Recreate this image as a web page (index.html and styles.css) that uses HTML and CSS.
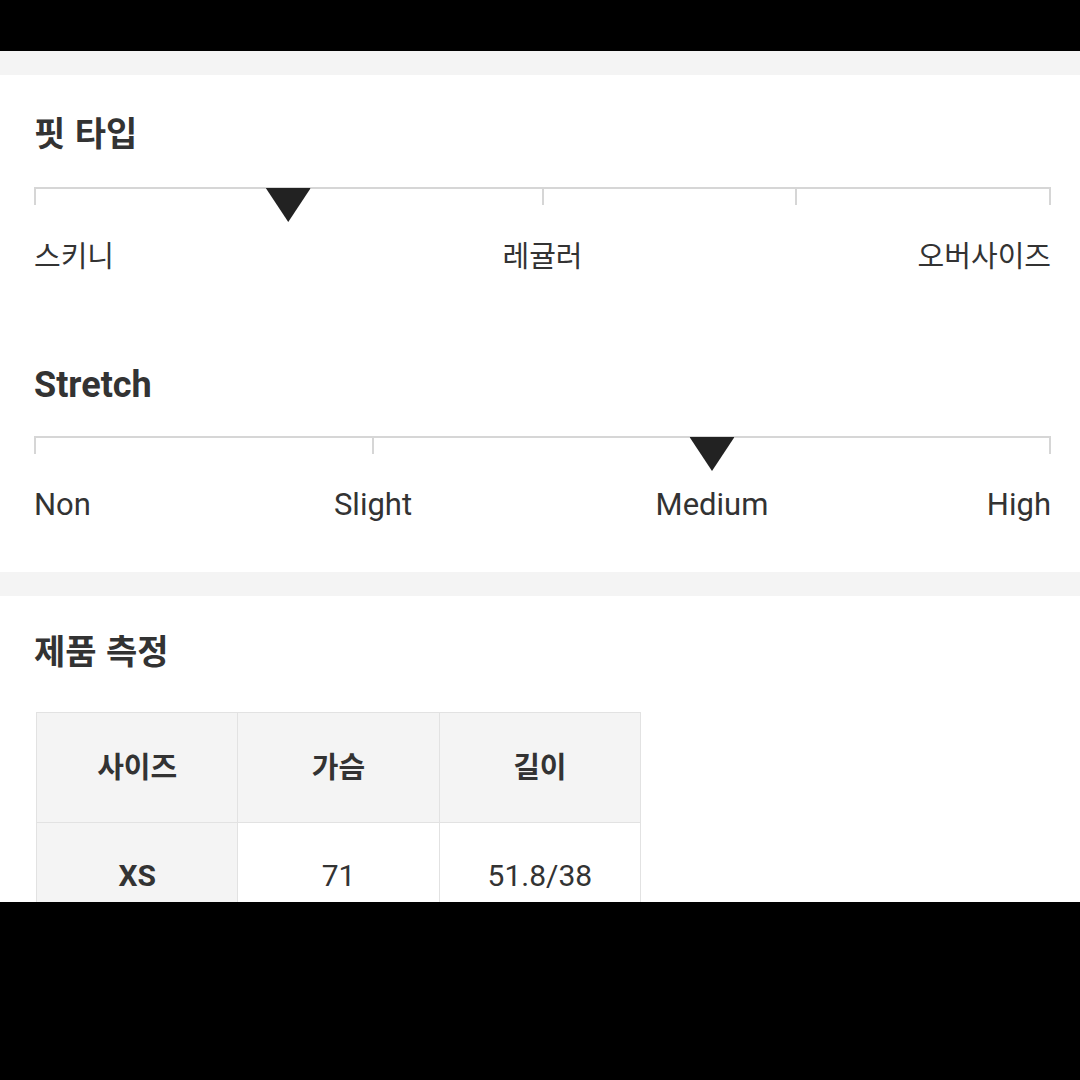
FILE: index.html
```html
<!DOCTYPE html>
<html lang="ko">
<head>
<meta charset="utf-8">
<title>핏 타입</title>
<link rel="stylesheet" href="styles.css">
</head>
<body>
<div class="topbar"></div>
<main class="page">
  <div class="band"></div>
  <section class="card fit-card">
    <h2 class="heading ko">핏 타입</h2>
    <div class="scale">
      <div class="track">
        <span class="tick"></span><span class="tick"></span><span class="tick"></span><span class="tick"></span><span class="tick"></span>
      </div>
      <div class="marker" style="left:25%"></div>
    </div>
    <div class="labels labels-4">
      <span class="lab ko l-start">스키니</span>
      <span class="lab ko l-mid">레귤러</span>
      <span class="lab ko l-end">오버사이즈</span>
    </div>

    <h2 class="heading en stretch-heading">Stretch</h2>
    <div class="scale">
      <div class="track">
        <span class="tick"></span><span class="tick"></span><span class="tick"></span><span class="tick"></span>
      </div>
      <div class="marker" style="left:66.667%"></div>
    </div>
    <div class="labels labels-6">
      <span class="lab en s-non">Non</span>
      <span class="lab en s-slight">Slight</span>
      <span class="lab en s-medium">Medium</span>
      <span class="lab en s-high">High</span>
    </div>
  </section>
  <div class="band"></div>
  <section class="card measure-card">
    <h2 class="heading ko">제품 측정</h2>
    <table class="size-table">
      <thead>
        <tr><th class="ko">사이즈</th><th class="ko">가슴</th><th class="ko">길이</th></tr>
      </thead>
      <tbody>
        <tr><td class="size-cell">XS</td><td>71</td><td>51.8/38</td></tr>
      </tbody>
    </table>
  </section>
</main>
</body>
</html>
```
FILE: styles.css
```css
html, body {
  margin: 0;
  padding: 0;
  background: #000;
}
body {
  width: 1080px;
  height: 1080px;
  overflow: hidden;
  font-family: Roboto, "Noto Sans CJK KR", sans-serif;
  color: #333;
}
.topbar {
  height: 51px;
  background: #000;
}
.page {
  background: #fff;
}
.band {
  height: 24px;
  background: #f4f4f4;
}
.card {
  background: #fff;
  padding: 0 29px 0 34px;
}
.fit-card {
  height: 497px;
  padding-top: 37px;
  box-sizing: border-box;
}
.measure-card {
  height: 306px;
  padding-top: 34px;
  box-sizing: border-box;
  overflow: hidden;
}
.heading {
  margin: 0;
  font-weight: 700;
  color: #333;
}
.heading.ko {
  font-family: "Noto Sans CJK KR", sans-serif;
  font-size: 34px;
  line-height: 40px;
}
.heading.en {
  font-family: Roboto, sans-serif;
  font-size: 36px;
  line-height: 40px;
}
.stretch-heading {
  margin-top: 94px;
}
.scale {
  position: relative;
  margin-top: 35px;
}
.stretch-heading + .scale {
  margin-top: 31px;
}
.track {
  display: flex;
  justify-content: space-between;
  border-top: 2px solid #d6d6d6;
  height: 16px;
}
.tick {
  width: 2px;
  height: 16px;
  background: #d6d6d6;
}
.marker {
  position: absolute;
  top: 1px;
  width: 45px;
  height: 34px;
  transform: translateX(-50%);
  background: #222;
  clip-path: polygon(0 0, 100% 0, 50% 100%);
}
.labels {
  display: grid;
  margin-top: 32px;
}
.labels-4 {
  grid-template-columns: repeat(4, 1fr);
}
.labels-6 {
  grid-template-columns: repeat(6, 1fr);
  margin-top: 34px;
}
.lab {
  white-space: nowrap;
  color: #333;
}
.lab.ko {
  font-family: "Noto Sans CJK KR", sans-serif;
  font-size: 29px;
  line-height: 34px;
}
.lab.en {
  font-family: Roboto, sans-serif;
  font-size: 31px;
  line-height: 34px;
}
.l-start { grid-column: 1; justify-self: start; }
.l-mid { grid-column: 2 / 4; justify-self: center; }
.l-end { grid-column: 4; justify-self: end; }
.s-non { grid-column: 1; justify-self: start; }
.s-slight { grid-column: 2 / 4; justify-self: center; }
.s-medium { grid-column: 4 / 6; justify-self: center; }
.s-high { grid-column: 6; justify-self: end; }

.size-table {
  margin: 42px 0 0 2px;
  border-collapse: collapse;
  table-layout: fixed;
  width: 605px;
}
.size-table th,
.size-table td {
  border: 1px solid #e2e2e2;
  padding: 0;
  text-align: center;
  vertical-align: middle;
  color: #333;
}
.size-table th {
  height: 110px;
  padding-bottom: 6px;
  box-sizing: border-box;
  background: #f4f4f4;
  font-family: "Noto Sans CJK KR", sans-serif;
  font-weight: 700;
  font-size: 29px;
}
.size-table td {
  height: 106px;
  vertical-align: top;
  padding-top: 35px;
  font-family: Roboto, sans-serif;
  font-size: 30px;
  line-height: 36px;
  font-weight: 400;
  background: #fff;
}
.size-table td.size-cell {
  background: #f4f4f4;
  font-weight: 700;
}
```
